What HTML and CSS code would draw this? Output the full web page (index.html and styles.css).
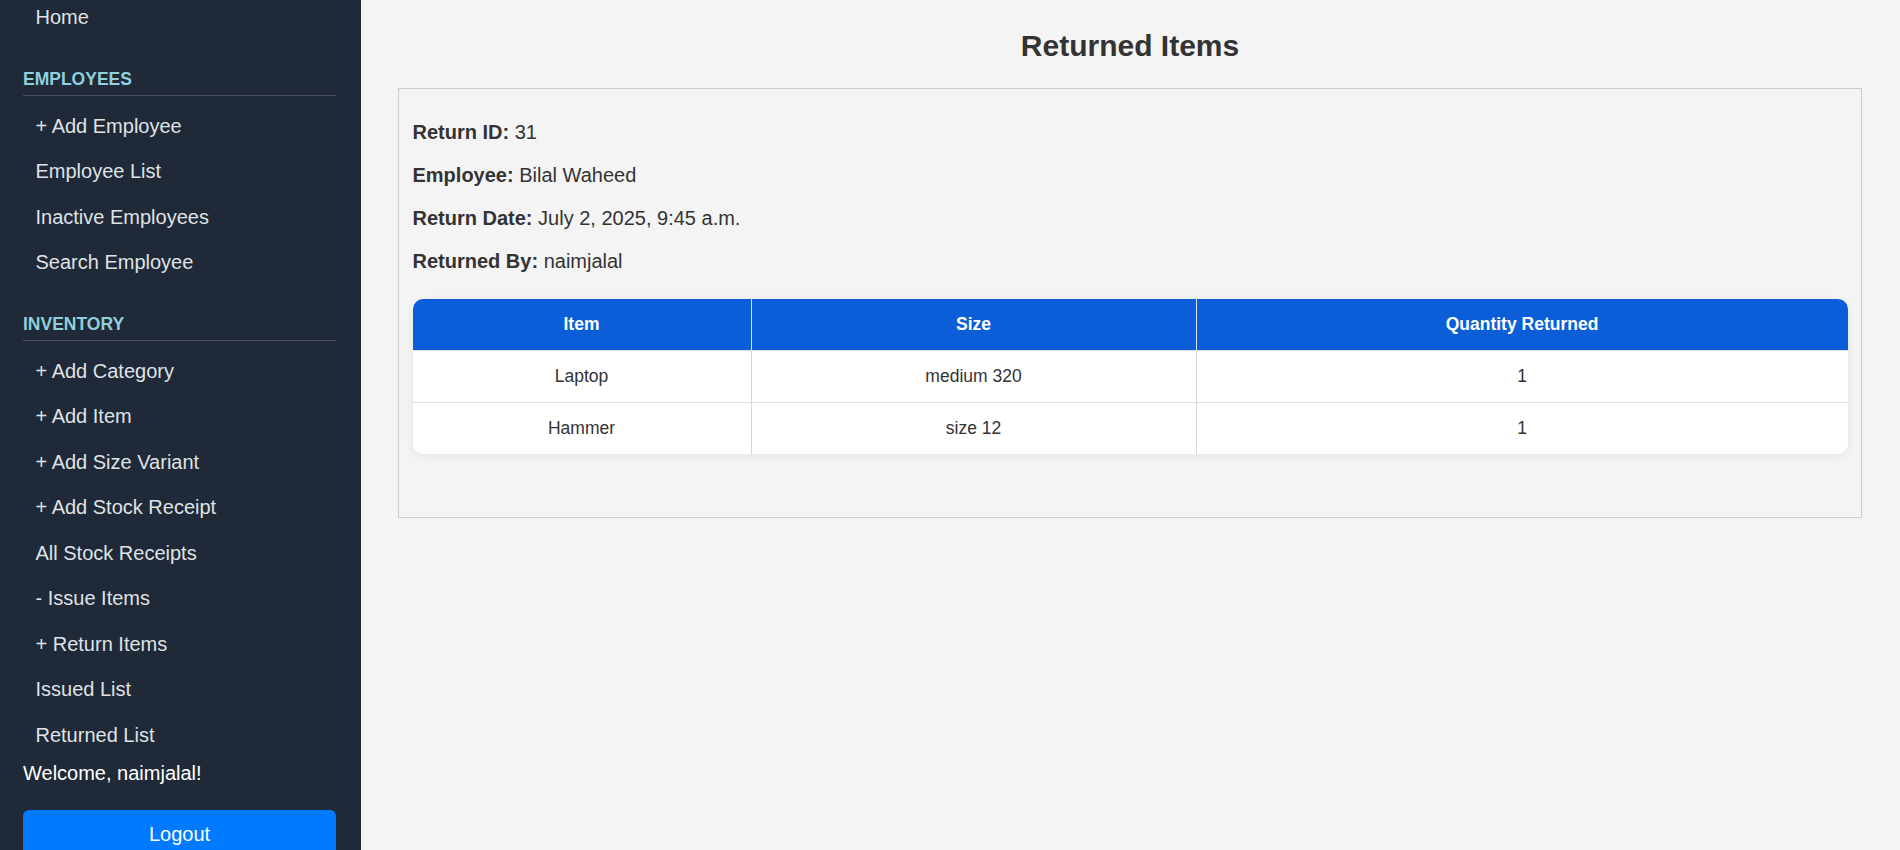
FILE: index.html
```html
<!DOCTYPE html>
<html lang="en">
<head>
<meta charset="utf-8">
<title>Returned Items</title>
<link rel="stylesheet" href="styles.css">
</head>
<body>
<aside class="sidebar">
  <div class="sidebar-inner">
    <a class="nav-link" href="#">Home</a>
    <div class="nav-section">
      <h3 class="nav-heading">Employees</h3>
      <a class="nav-link" href="#">+ Add Employee</a>
      <a class="nav-link" href="#">Employee List</a>
      <a class="nav-link" href="#">Inactive Employees</a>
      <a class="nav-link" href="#">Search Employee</a>
    </div>
    <div class="nav-section">
      <h3 class="nav-heading">Inventory</h3>
      <a class="nav-link" href="#">+ Add Category</a>
      <a class="nav-link" href="#">+ Add Item</a>
      <a class="nav-link" href="#">+ Add Size Variant</a>
      <a class="nav-link" href="#">+ Add Stock Receipt</a>
      <a class="nav-link" href="#">All Stock Receipts</a>
      <a class="nav-link" href="#">- Issue Items</a>
      <a class="nav-link" href="#">+ Return Items</a>
      <a class="nav-link" href="#">Issued List</a>
      <a class="nav-link" href="#">Returned List</a>
    </div>
    <p class="welcome">Welcome, naimjalal!</p>
    <button class="logout" type="button">Logout</button>
  </div>
</aside>
<main class="main">
  <h1 class="page-title">Returned Items</h1>
  <section class="card">
    <p class="info"><strong>Return ID:</strong> 31</p>
    <p class="info"><strong>Employee:</strong> Bilal Waheed</p>
    <p class="info"><strong>Return Date:</strong> July 2, 2025, 9:45 a.m.</p>
    <p class="info"><strong>Returned By:</strong> naimjalal</p>
    <table class="items">
      <thead>
        <tr>
          <th class="col-item">Item</th>
          <th class="col-size">Size</th>
          <th class="col-qty">Quantity Returned</th>
        </tr>
      </thead>
      <tbody>
        <tr>
          <td>Laptop</td>
          <td>medium 320</td>
          <td>1</td>
        </tr>
        <tr>
          <td>Hammer</td>
          <td>size 12</td>
          <td>1</td>
        </tr>
      </tbody>
    </table>
  </section>
</main>
</body>
</html>
```

FILE: styles.css
```css
* {
  box-sizing: border-box;
}

html, body {
  margin: 0;
  height: 100%;
}

body {
  display: flex;
  height: 100vh;
  overflow: hidden;
  font-family: "Liberation Sans", Arial, sans-serif;
  background: #f4f4f4;
  color: #333;
}

/* Sidebar */
.sidebar {
  width: 361px;
  flex: 0 0 361px;
  background: #1f2937;
  padding: 0 25px 0 23px;
  overflow: hidden;
}

.sidebar-inner {
  display: flex;
  flex-direction: column;
  margin-top: -5px;
}

.nav-link {
  display: block;
  font-size: 20px;
  line-height: 23px;
  padding: 11.25px 12.5px;
  color: #dfe2e6;
  text-decoration: none;
}

.nav-section {
  display: flex;
  flex-direction: column;
  margin-top: 28px;
}

.nav-heading {
  margin: 0 0 8px;
  font-size: 17.5px;
  line-height: 20px;
  font-weight: bold;
  text-transform: uppercase;
  color: #8fd0dc;
  padding-bottom: 6px;
  border-bottom: 1px solid #464d57;
}

.welcome {
  margin: 4px 0 0;
  font-size: 20px;
  line-height: 23px;
  color: #ffffff;
}

.logout {
  margin-top: 25px;
  width: 100%;
  height: 48px;
  border: none;
  border-radius: 6px;
  background: #007bff;
  color: #ffffff;
  font-family: inherit;
  font-size: 20px;
  line-height: 23px;
  padding: 12.5px;
}

/* Main */
.main {
  flex: 1;
  padding: 28.5px 38px 0 37px;
}

.page-title {
  margin: 0 0 25px;
  text-align: center;
  font-size: 30px;
  line-height: 34px;
  font-weight: bold;
  color: #333;
}

.card {
  border: 1px solid #cccccc;
  padding: 12.5px 13.5px 12.5px 13.5px;
}

.info {
  margin: 20px 0;
  font-size: 20px;
  line-height: 23px;
  color: #333;
}

.items {
  width: 100%;
  margin: 26px 0 50px;
  border-collapse: separate;
  border-spacing: 0;
  background: #ffffff;
  border-radius: 10px;
  overflow: hidden;
  box-shadow: 0 2px 10px rgba(0, 0, 0, 0.07);
  font-size: 17.5px;
  line-height: 21px;
}

.items th,
.items td {
  padding: 15px;
  text-align: center;
  border-right: 1px solid #d6d6d6;
  border-bottom: 1px solid #dddddd;
}

.items th:last-child,
.items td:last-child {
  border-right: none;
}

.items tbody tr:last-child td {
  border-bottom: none;
}

.items th {
  background: #0b5ed7;
  color: #ffffff;
  font-weight: bold;
  border-right-color: #e0e0e0;
}

.items td {
  color: #333;
}

.col-item {
  width: 339px;
}

.col-size {
  width: 445px;
}
```
